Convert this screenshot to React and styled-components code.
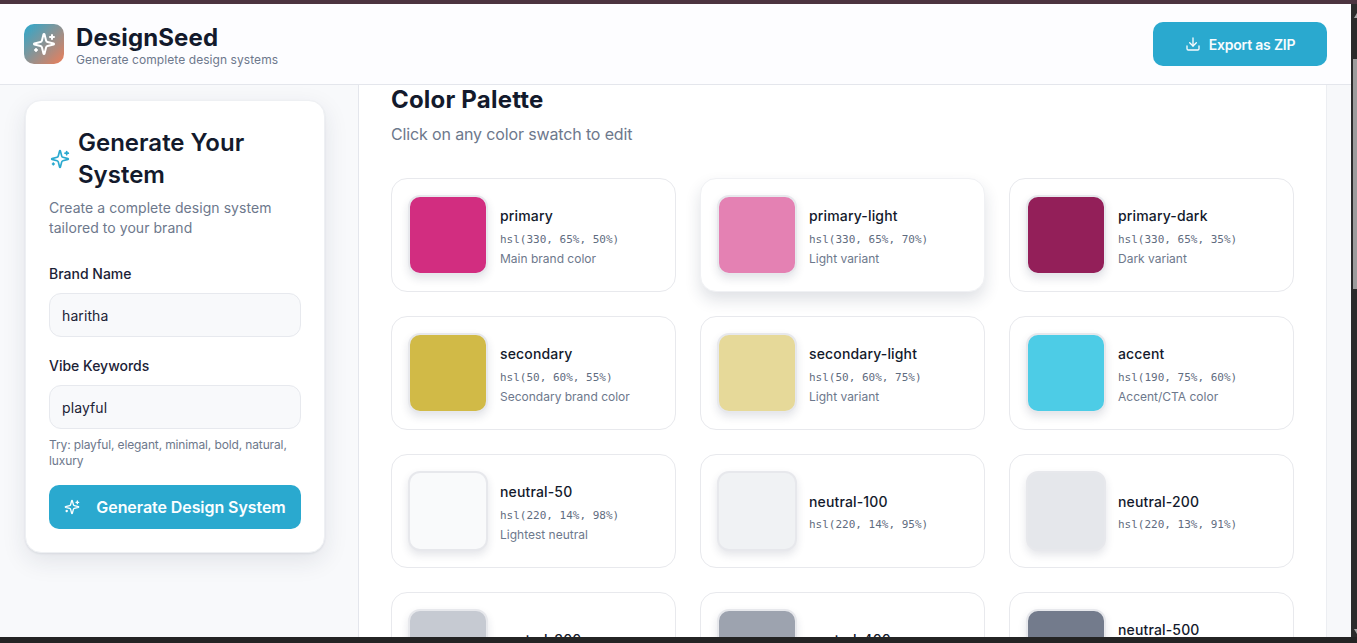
import React from "react";
import styled, { createGlobalStyle } from "styled-components";
import { Download } from "lucide-react";

const Global = createGlobalStyle`
  html, body { margin: 0; padding: 0; height: 100%; overflow: hidden; background: #2b2b2b; }
  * { box-sizing: border-box; }
  body { font-family: Inter, "Noto Sans", sans-serif; color: #131a2c; }
`;

const Frame = styled.div`
  width: 1357px; height: 643px; display: flex; flex-direction: column; overflow: hidden; background: #262626;
`;
const TopEdge = styled.div` height: 4px; flex: none; background: #4c3440; `;
const Middle = styled.div` flex: none; height: 633px; display: flex; `;
const BottomEdge = styled.div` height: 6px; flex: none; background: #242424; `;
const Viewport = styled.div` width: 1351px; flex: none; display: flex; flex-direction: column; background: #fff; overflow: hidden; `;
const ScrollTrack = styled.div`
  flex: 1; background: #2b2b2b; display: flex; flex-direction: column; align-items: flex-end; justify-content: space-between; padding: 9px 0 3px;
`;
const ScrollArrow = styled.div`
  width: 0; height: 0; border-left: 3px solid transparent; border-right: 0 solid transparent;
  ${p => p.$down ? "border-top: 5px solid #a8a8a8;" : "border-bottom: 5px solid #a8a8a8;"}
`;
const ScrollThumb = styled.div` width: 4px; height: 230px; background: #9c9c9c; margin-bottom: 300px; `;

const Header = styled.header`
  height: 81px; flex: none; display: flex; align-items: center; justify-content: space-between;
  padding: 0 24px; background: #fdfdff; border-bottom: 1px solid #e4e6ec;
`;
const Brand = styled.div` display: flex; align-items: center; gap: 12px; `;
const Logo = styled.div`
  width: 40px; height: 40px; border-radius: 10px; display: flex; align-items: center; justify-content: center;
  background: linear-gradient(135deg, #2aa9cf 0%, #ee7d58 100%); color: #fff;
`;
const BrandText = styled.div` display: flex; flex-direction: column; padding-top: 4px; `;
const BrandName = styled.div` font-size: 24px; font-weight: 700; line-height: 28px; letter-spacing: 0.1px; color: #131a2c; `;
const BrandSub = styled.div` font-size: 12px; line-height: 16px; letter-spacing: 0.07px; color: #6d788c; `;
const ExportButton = styled.button`
  width: 174px; height: 44px; border: 0; border-radius: 10px; background: #2aa9cf; color: #f8fcfe;
  display: flex; align-items: center; justify-content: center; gap: 8px;
  font: 600 14px Inter, sans-serif; letter-spacing: -0.2px;
`;

const Body = styled.div` flex: 1; display: flex; min-height: 0; `;
const Sidebar = styled.aside` width: 359px; flex: none; padding: 15px 0 0 25px; background: #f8f9fb; border-right: 1px solid #e4e6ec; `;
const Card = styled.section`
  width: 300px; height: 453px; padding: 24px; background: #fff; border: 1px solid #eef0f3; border-radius: 16px;
  box-shadow: 0 8px 24px rgba(30, 40, 70, 0.1), 0 1px 2px rgba(30, 40, 70, 0.08);
`;
const CardTitleRow = styled.div` display: flex; align-items: center; gap: 8px; margin-top: 2px; color: #2aa9cf; `;
const CardTitle = styled.h2` margin: 0; font-size: 24px; font-weight: 600; line-height: 32px; color: #131a2c; `;
const CardDesc = styled.p` margin: 7px 0 0 -1px; font-size: 14px; line-height: 20px; color: #6d788c; letter-spacing: 0.05px; `;
const Field = styled.div` margin: ${p => p.$top}px 0 0 -1px; display: flex; flex-direction: column; gap: 8px; `;
const Label = styled.label` font-size: 14px; line-height: 20px; font-weight: 500; color: #1b2236; margin-bottom: 1px; `;
const Input = styled.input`
  width: 252px; height: 44px; border: 1px solid #e7e9ee; border-radius: 12px; background: #f8f9fb; padding: 0 12px;
  font: 400 14px Inter, sans-serif; color: #1b2236; outline: none; letter-spacing: 0.1px;
`;
const Hint = styled.p` margin: 8px 0 0 -1px; font-size: 12px; line-height: 16px; color: #6d788c; letter-spacing: -0.13px; `;
const GenerateButton = styled.button`
  width: 252px; height: 44px; margin: 16px 0 0 -1px; border: 0; border-radius: 10px; background: #2aa9cf; color: #fbfeff;
  display: flex; align-items: center; justify-content: center; gap: 16px;
  font: 600 16px Inter, sans-serif; letter-spacing: -0.07px;
`;

const Main = styled.main` width: 968px; flex: none; padding: 0 32px; background: #fff; border-right: 1px solid #eceef2; overflow: hidden; `;
const Gutter = styled.div` flex: 1; background: #f7f8fa; `;
const PageTitle = styled.h1` margin: 0; font-size: 24px; line-height: 30px; font-weight: 700; color: #131a2c; letter-spacing: 0.2px; `;
const PageSub = styled.p` margin: 7px 0 0; font-size: 16px; line-height: 24px; color: #6d788c; letter-spacing: -0.14px; `;
const Grid = styled.div` display: grid; grid-template-columns: repeat(3, 285px); gap: 24px; margin-top: 32px; `;
const Swatch = styled.div`
  width: 80px; height: 80px; flex: none; border-radius: 12px; border: 2px solid #e7e8ec; background: ${p => p.$color};
  box-shadow: 0 4px 8px rgba(30, 40, 70, 0.12);
`;
const ColorCard = styled.div`
  height: 114px; display: flex; align-items: center; gap: 12px; padding: 0 16px; background: #fff;
  border: 1px solid ${p => (p.$hover ? "#f0f1f4" : "#e8e9ed")}; border-radius: 16px;
  ${p => p.$hover && "box-shadow: 0 8px 16px rgba(30, 40, 70, 0.14);"}
`;
const Info = styled.div` display: flex; flex-direction: column; min-width: 0; padding-top: ${p => (p.$bare ? 3 : 2)}px; `;
const Name = styled.div` font-size: 14px; line-height: 20px; font-weight: 500; color: #131a2c; letter-spacing: 0.15px; `;
const Value = styled.div` margin-top: ${p => (p.$bare ? 5 : 6)}px; font-family: "DejaVu Sans Mono", monospace; font-size: 11px; line-height: 16px; color: #5f6c80; `;
const Desc = styled.div` margin-top: 3px; font-size: 12px; line-height: 16px; color: #6d788c; `;
const SparkIcon = styled.svg`
  flex: none; fill: none; stroke: currentColor; stroke-width: 2; stroke-linecap: round; stroke-linejoin: round;
`;

const Sparkle = ({ size }) => (
  <SparkIcon width={size} height={size} viewBox="0 0 24 24">
    <path d="M9.937 15.5A2 2 0 0 0 8.5 14.063l-6.135-1.582a.5.5 0 0 1 0-.962L8.5 9.936A2 2 0 0 0 9.937 8.5l1.582-6.135a.5.5 0 0 1 .963 0L14.063 8.5A2 2 0 0 0 15.5 9.937l6.135 1.581a.5.5 0 0 1 0 .964L15.5 14.063a2 2 0 0 0-1.437 1.437l-1.582 6.135a.5.5 0 0 1-.963 0z" />
    <path d="M20 3v4" />
    <path d="M22 5h-4" />
    <path d="M4 17v2" />
    <path d="M5 18H3" />
  </SparkIcon>
);

const colors = [
  ["primary", "hsl(330, 65%, 50%)", "Main brand color"],
  ["primary-light", "hsl(330, 65%, 70%)", "Light variant", true],
  ["primary-dark", "hsl(330, 65%, 35%)", "Dark variant"],
  ["secondary", "hsl(50, 60%, 55%)", "Secondary brand color"],
  ["secondary-light", "hsl(50, 60%, 75%)", "Light variant"],
  ["accent", "hsl(190, 75%, 60%)", "Accent/CTA color"],
  ["neutral-50", "hsl(220, 14%, 98%)", "Lightest neutral"],
  ["neutral-100", "hsl(220, 14%, 95%)"],
  ["neutral-200", "hsl(220, 13%, 91%)"],
  ["neutral-300", "hsl(220, 12%, 80%)"],
  ["neutral-400", "hsl(220, 10%, 65%)"],
  ["neutral-500", "hsl(220, 10%, 50%)", "Medium neutral"],
];

export default function App() {
  return (
    <Frame>
      <Global />
      <TopEdge />
      <Middle>
        <Viewport>
          <Header>
            <Brand>
              <Logo><Sparkle size={24} /></Logo>
              <BrandText>
                <BrandName>DesignSeed</BrandName>
                <BrandSub>Generate complete design systems</BrandSub>
              </BrandText>
            </Brand>
            <ExportButton><Download size={16} />Export as ZIP</ExportButton>
          </Header>
          <Body>
            <Sidebar>
              <Card>
                <CardTitleRow>
                  <Sparkle size={20} />
                  <CardTitle>Generate Your System</CardTitle>
                </CardTitleRow>
                <CardDesc>Create a complete design system tailored to your brand</CardDesc>
                <Field $top={26}>
                  <Label>Brand Name</Label>
                  <Input defaultValue="haritha" />
                </Field>
                <Field $top={19}>
                  <Label>Vibe Keywords</Label>
                  <Input defaultValue="playful" />
                </Field>
                <Hint>Try: playful, elegant, minimal, bold, natural, luxury</Hint>
                <GenerateButton><Sparkle size={16} />Generate Design System</GenerateButton>
              </Card>
            </Sidebar>
            <Main>
              <PageTitle>Color Palette</PageTitle>
              <PageSub>Click on any color swatch to edit</PageSub>
              <Grid>
                {colors.map(([name, value, desc, hover]) => (
                  <ColorCard key={name} $hover={hover}>
                    <Swatch $color={value} />
                    <Info $bare={!desc}>
                      <Name>{name}</Name>
                      <Value $bare={!desc}>{value}</Value>
                      {desc && <Desc>{desc}</Desc>}
                    </Info>
                  </ColorCard>
                ))}
              </Grid>
            </Main>
            <Gutter />
          </Body>
        </Viewport>
        <ScrollTrack>
          <ScrollArrow />
          <ScrollThumb />
          <ScrollArrow $down />
        </ScrollTrack>
      </Middle>
      <BottomEdge />
    </Frame>
  );
}
